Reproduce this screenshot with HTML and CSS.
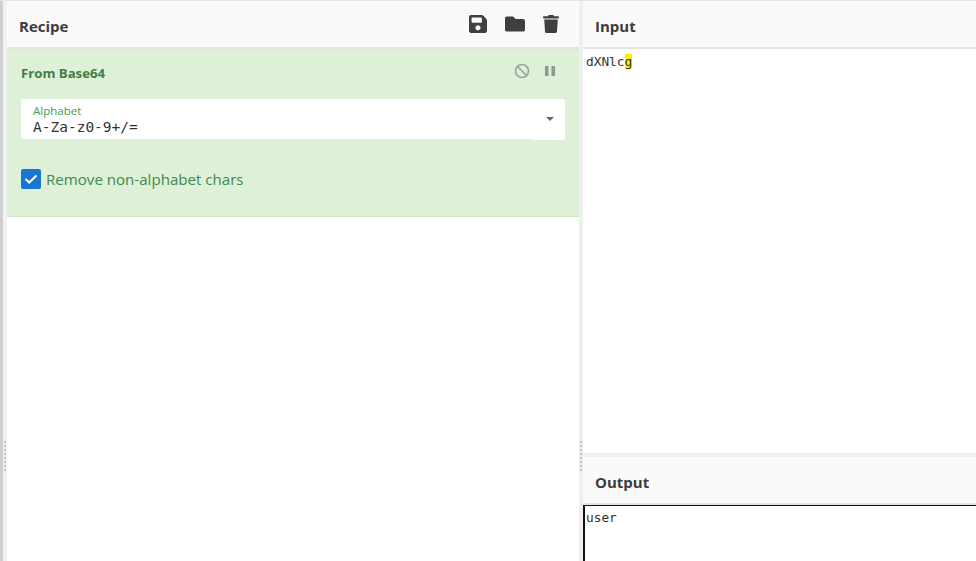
FILE: index.html
```html
<!DOCTYPE html>
<html lang="en">
<head>
<meta charset="utf-8">
<title>CyberChef</title>
<link rel="stylesheet" href="styles.css">
</head>
<body>
<div class="app">
  <div class="edge"></div>
  <section class="recipe">
    <header class="head">
      <h1 class="title">Recipe</h1>
      <div class="tools">
        <svg class="tool" width="18" height="18" viewBox="0 32 448 448"><path d="M433.900 129.900l-83.900-83.900A48 48 0 0 0 316.100 32H48C21.500 32 0 53.500 0 80v352c0 26.500 21.500 48 48 48h352c26.500 0 48-21.500 48-48V163.900a48 48 0 0 0-14.100-34zM224 416c-35.300 0-64-28.700-64-64s28.700-64 64-64 64 28.700 64 64-28.700 64-64 64zm96-304.500V212c0 6.600-5.400 12-12 12H76c-6.600 0-12-5.400-12-12V108c0-6.600 5.400-12 12-12h228.500c3.200 0 6.200 1.300 8.500 3.500l3.500 3.500c2.200 2.200 3.500 5.300 3.500 8.500z"/></svg>
        <svg class="tool" width="20" height="18" viewBox="0 49 512 414"><path d="M464 128H272l-64-64H48C21.500 64 0 85.500 0 112v288c0 26.500 21.500 48 48 48h416c26.500 0 48-21.500 48-48V176c0-26.500-21.500-48-48-48z"/></svg>
        <svg class="tool" width="16" height="18" viewBox="0 0 448 512"><path d="M432 32H312l-9.400-18.700A24 24 0 0 0 281.100 0H166.800a23.700 23.700 0 0 0-21.400 13.300L136 32H16A16 16 0 0 0 0 48v32a16 16 0 0 0 16 16h416a16 16 0 0 0 16-16V48a16 16 0 0 0-16-16zM53.200 467a48 48 0 0 0 47.900 45h245.800a48 48 0 0 0 47.900-45L416 128H32z"/></svg>
      </div>
    </header>
    <div class="op">
      <div class="op-head">
        <h2 class="op-name">From Base64</h2>
        <div class="op-ctl">
          <svg width="16" height="16" viewBox="0 0 16 16" class="ctl"><circle cx="8" cy="8" r="6.500" fill="none" stroke="#9ba59b" stroke-width="1.700"/><path d="M3.500 3.500l9 9" stroke="#9ba59b" stroke-width="1.700"/></svg>
          <svg width="16" height="16" viewBox="0 0 16 16" class="ctl"><path d="M3 3h3.500v10H3zM9.500 3H13v10H9.500z" fill="#8f9a8f"/></svg>
        </div>
      </div>
      <div class="field">
        <label class="field-label">Alphabet</label>
        <div class="field-value">A-Za-z0-9+/=</div>
        <span class="caret"></span>
      </div>
      <div class="check">
        <span class="box"><svg width="14" height="14" viewBox="0 0 14 14"><path d="M1.500 7l3.700 3.500 7.300-7" fill="none" stroke="#fff" stroke-width="2"/></svg></span>
        <span class="check-label">Remove non-alphabet chars</span>
      </div>
    </div>
    <div class="dots left-dots"></div>
  </section>
  <div class="gutter"><div class="dots"></div></div>
  <section class="io">
    <div class="input">
      <header class="head"><h1 class="title">Input</h1></header>
      <div class="text"><span>dXNlc</span><mark class="hl">g</mark></div>
    </div>
    <div class="hgutter"></div>
    <div class="output">
      <header class="head out-head"><h1 class="title">Output</h1></header>
      <div class="text out-text">user</div>
    </div>
  </section>
</div>
</body>
</html>
```
FILE: styles.css
```css
* { box-sizing: border-box; }
html, body { margin: 0; height: 100%; overflow: hidden; background: #fff; }
.app { display: flex; height: 561px; border-top: 1px solid #e3e3e3; font-family: "Open Sans", "Noto Sans", sans-serif; color: #3a3a3a; }
.edge { width: 3px; background: #cfcfcf; flex: none; }
.recipe { width: 576px; flex: none; position: relative; border-left: 4px solid #f1f1f1; }
.head { height: 48px; background: #fafafa; border-bottom: 2px solid #e3e3e3; display: flex; align-items: center; justify-content: space-between; padding: 3px 20px 0 12px; }
.title { margin: 0; font-size: 15px; font-weight: 700; color: #3c3c3c; }
.tools { display: flex; align-items: center; gap: 18px; margin-top: -3px; }
.tool { fill: #3f3f3f; display: block; }
.op { height: 168px; background: #dff0d8; border-bottom: 1px solid #cfe5c6; padding: 0 14px; color: #3c763d; }
.op-head { height: 50px; display: flex; align-items: center; justify-content: space-between; padding-bottom: 2px; }
.op-name { margin: 0; font-size: 13.200px; font-weight: 700; color: #3f7f40; }
.op-ctl { display: flex; gap: 12px; margin-right: 7px; margin-top: -5px; }
.ctl { display: block; }
.field { position: relative; height: 41px; background: #fff; border-radius: 2px; padding: 6px 12px 0; }
.field::after { content: ""; position: absolute; left: 0; right: 32px; bottom: 0; height: 1px; background: #dff0d8; }
.field-label { display: block; font-size: 11.500px; line-height: 12px; color: #4c9a4f; }
.field-value { font-family: "DejaVu Sans Mono", monospace; font-size: 14.500px; line-height: 18px; margin-top: 1px; color: #333; }
.caret { position: absolute; right: 11px; top: 18px; border: 4px solid transparent; border-top: 4px solid #5f6a72; border-bottom: 0; }
.check { display: flex; align-items: center; gap: 5px; margin-top: 29px; }
.box { width: 20px; height: 20px; background: #1976d2; border-radius: 2px; display: flex; align-items: center; justify-content: center; }
.check-label { font-size: 15.100px; color: #43894a; }
.gutter { width: 4px; flex: none; background: #efefef; position: relative; }
.dots { position: absolute; left: 1px; top: 440px; width: 2px; height: 30px; background: repeating-linear-gradient(#c4c4c4 0 2px, transparent 2px 4px); }
.left-dots { left: -3px; }
.io { flex: 1; min-width: 0; display: flex; flex-direction: column; }
.input { height: 452px; }
.text { font-family: "DejaVu Sans Mono", monospace; font-size: 12.800px; line-height: 15px; padding: 5px 3px; color: #333; }
.hl { background: #fff000; color: inherit; }
.hgutter { height: 4px; background: #efefef; flex: none; }
.output { flex: 1; min-height: 0; }
.out-text { height: 60px; border-top: 1px solid #111; border-left: 2px solid #111; padding: 4px 1px; }
```
